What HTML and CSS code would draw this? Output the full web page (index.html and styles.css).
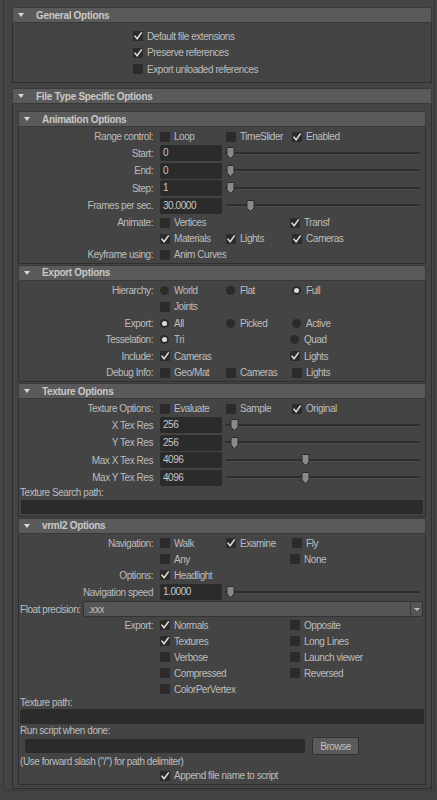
FILE: index.html
```html
<!DOCTYPE html>
<html>
<head>
<meta charset="utf-8">
<link rel="stylesheet" href="styles.css">
</head>
<body>
<div class="scroll">
  <section class="frame">
    <div class="fhead"><span class="tri"></span>General Options</div>
    <div class="fbody general">
      <div class="grow"><span class="cb on"><i class="box"><svg viewBox="0 0 10 10"><path d="M2 5.2 L4.1 7.8 L8.3 2"/></svg></i>Default file extensions</span></div>
      <div class="grow"><span class="cb on"><i class="box"><svg viewBox="0 0 10 10"><path d="M2 5.2 L4.1 7.8 L8.3 2"/></svg></i>Preserve references</span></div>
      <div class="grow"><span class="cb"><i class="box"></i>Export unloaded references</span></div>
    </div>
  </section>

  <section class="frame">
    <div class="fhead"><span class="tri"></span>File Type Specific Options</div>
    <div class="fbody outer">

      <section class="frame sub">
        <div class="fhead"><span class="tri"></span>Animation Options</div>
        <div class="fbody anim">
          <div class="row c3"><span class="lbl">Range control:</span>
            <span class="cb"><i class="box"></i>Loop</span>
            <span class="cb"><i class="box"></i>TimeSlider</span>
            <span class="cb on"><i class="box"><svg viewBox="0 0 10 10"><path d="M2 5.2 L4.1 7.8 L8.3 2"/></svg></i>Enabled</span>
          </div>
          <div class="row frow"><span class="lbl">Start:</span><span class="field">0</span>
            <div class="slider"><span class="track"></span><span class="thumb" style="left:1px"><svg viewBox="0 0 9 12"><path d="M1 1.5 Q1 .5 2 .5 H7 Q8 .5 8 1.5 V8 L4.5 11.5 L1 8 Z"/></svg></span></div></div>
          <div class="row frow"><span class="lbl">End:</span><span class="field">0</span>
            <div class="slider"><span class="track"></span><span class="thumb" style="left:1px"><svg viewBox="0 0 9 12"><path d="M1 1.5 Q1 .5 2 .5 H7 Q8 .5 8 1.5 V8 L4.5 11.5 L1 8 Z"/></svg></span></div></div>
          <div class="row frow"><span class="lbl">Step:</span><span class="field">1</span>
            <div class="slider"><span class="track"></span><span class="thumb" style="left:1px"><svg viewBox="0 0 9 12"><path d="M1 1.5 Q1 .5 2 .5 H7 Q8 .5 8 1.5 V8 L4.5 11.5 L1 8 Z"/></svg></span></div></div>
          <div class="row frow"><span class="lbl">Frames per sec.</span><span class="field">30.0000</span>
            <div class="slider"><span class="track"></span><span class="thumb" style="left:21px"><svg viewBox="0 0 9 12"><path d="M1 1.5 Q1 .5 2 .5 H7 Q8 .5 8 1.5 V8 L4.5 11.5 L1 8 Z"/></svg></span></div></div>
          <div class="row c2"><span class="lbl">Animate:</span>
            <span class="cb"><i class="box"></i>Vertices</span>
            <span class="cb on"><i class="box"><svg viewBox="0 0 10 10"><path d="M2 5.2 L4.1 7.8 L8.3 2"/></svg></i>Transf</span>
          </div>
          <div class="row c3"><span class="lbl"></span>
            <span class="cb on"><i class="box"><svg viewBox="0 0 10 10"><path d="M2 5.2 L4.1 7.8 L8.3 2"/></svg></i>Materials</span>
            <span class="cb on"><i class="box"><svg viewBox="0 0 10 10"><path d="M2 5.2 L4.1 7.8 L8.3 2"/></svg></i>Lights</span>
            <span class="cb on"><i class="box"><svg viewBox="0 0 10 10"><path d="M2 5.2 L4.1 7.8 L8.3 2"/></svg></i>Cameras</span>
          </div>
          <div class="row c3"><span class="lbl">Keyframe using:</span>
            <span class="cb"><i class="box"></i>Anim Curves</span>
          </div>
        </div>
      </section>

      <section class="frame sub">
        <div class="fhead"><span class="tri"></span>Export Options</div>
        <div class="fbody export">
          <div class="row c3"><span class="lbl">Hierarchy:</span>
            <span class="rb"><i class="dot"></i>World</span>
            <span class="rb"><i class="dot"></i>Flat</span>
            <span class="rb on"><i class="dot"></i>Full</span>
          </div>
          <div class="row c3"><span class="lbl"></span>
            <span class="cb"><i class="box"></i>Joints</span>
          </div>
          <div class="row c3"><span class="lbl">Export:</span>
            <span class="rb on"><i class="dot"></i>All</span>
            <span class="rb"><i class="dot"></i>Picked</span>
            <span class="rb"><i class="dot"></i>Active</span>
          </div>
          <div class="row c2"><span class="lbl">Tesselation:</span>
            <span class="rb on"><i class="dot"></i>Tri</span>
            <span class="rb"><i class="dot"></i>Quad</span>
          </div>
          <div class="row c2"><span class="lbl">Include:</span>
            <span class="cb on"><i class="box"><svg viewBox="0 0 10 10"><path d="M2 5.2 L4.1 7.8 L8.3 2"/></svg></i>Cameras</span>
            <span class="cb on"><i class="box"><svg viewBox="0 0 10 10"><path d="M2 5.2 L4.1 7.8 L8.3 2"/></svg></i>Lights</span>
          </div>
          <div class="row c3"><span class="lbl">Debug Info:</span>
            <span class="cb"><i class="box"></i>Geo/Mat</span>
            <span class="cb"><i class="box"></i>Cameras</span>
            <span class="cb"><i class="box"></i>Lights</span>
          </div>
        </div>
      </section>

      <section class="frame sub">
        <div class="fhead"><span class="tri"></span>Texture Options</div>
        <div class="fbody texture">
          <div class="row c3"><span class="lbl">Texture Options:</span>
            <span class="cb"><i class="box"></i>Evaluate</span>
            <span class="cb"><i class="box"></i>Sample</span>
            <span class="cb on"><i class="box"><svg viewBox="0 0 10 10"><path d="M2 5.2 L4.1 7.8 L8.3 2"/></svg></i>Original</span>
          </div>
          <div class="row frow"><span class="lbl">X Tex Res</span><span class="field">256</span>
            <div class="slider"><span class="track"></span><span class="thumb" style="left:5px"><svg viewBox="0 0 9 12"><path d="M1 1.5 Q1 .5 2 .5 H7 Q8 .5 8 1.5 V8 L4.5 11.5 L1 8 Z"/></svg></span></div></div>
          <div class="row frow"><span class="lbl">Y Tex Res</span><span class="field">256</span>
            <div class="slider"><span class="track"></span><span class="thumb" style="left:5px"><svg viewBox="0 0 9 12"><path d="M1 1.5 Q1 .5 2 .5 H7 Q8 .5 8 1.5 V8 L4.5 11.5 L1 8 Z"/></svg></span></div></div>
          <div class="row frow"><span class="lbl">Max X Tex Res</span><span class="field">4096</span>
            <div class="slider"><span class="track"></span><span class="thumb" style="left:76px"><svg viewBox="0 0 9 12"><path d="M1 1.5 Q1 .5 2 .5 H7 Q8 .5 8 1.5 V8 L4.5 11.5 L1 8 Z"/></svg></span></div></div>
          <div class="row frow"><span class="lbl">Max Y Tex Res</span><span class="field">4096</span>
            <div class="slider"><span class="track"></span><span class="thumb" style="left:76px"><svg viewBox="0 0 9 12"><path d="M1 1.5 Q1 .5 2 .5 H7 Q8 .5 8 1.5 V8 L4.5 11.5 L1 8 Z"/></svg></span></div></div>
          <div class="plabel">Texture Search path:</div>
          <div class="pfield"></div>
        </div>
      </section>

      <section class="frame sub">
        <div class="fhead"><span class="tri"></span>vrml2 Options</div>
        <div class="fbody vrml">
          <div class="row c3"><span class="lbl">Navigation:</span>
            <span class="cb"><i class="box"></i>Walk</span>
            <span class="cb on"><i class="box"><svg viewBox="0 0 10 10"><path d="M2 5.2 L4.1 7.8 L8.3 2"/></svg></i>Examine</span>
            <span class="cb"><i class="box"></i>Fly</span>
          </div>
          <div class="row c2"><span class="lbl"></span>
            <span class="cb"><i class="box"></i>Any</span>
            <span class="cb"><i class="box"></i>None</span>
          </div>
          <div class="row c2"><span class="lbl">Options:</span>
            <span class="cb on"><i class="box"><svg viewBox="0 0 10 10"><path d="M2 5.2 L4.1 7.8 L8.3 2"/></svg></i>Headlight</span>
          </div>
          <div class="row frow nav"><span class="lbl">Navigation speed</span><span class="field">1.0000</span>
            <div class="slider"><span class="track"></span><span class="thumb" style="left:1px"><svg viewBox="0 0 9 12"><path d="M1 1.5 Q1 .5 2 .5 H7 Q8 .5 8 1.5 V8 L4.5 11.5 L1 8 Z"/></svg></span></div></div>
          <div class="ddrow"><span class="ddlbl">Float precision:</span>
            <div class="dropdown"><span class="ddtext">.xxx</span><span class="ddarrow"><i></i></span></div>
          </div>
          <div class="row c2"><span class="lbl">Export:</span>
            <span class="cb on"><i class="box"><svg viewBox="0 0 10 10"><path d="M2 5.2 L4.1 7.8 L8.3 2"/></svg></i>Normals</span>
            <span class="cb"><i class="box"></i>Opposite</span>
          </div>
          <div class="row c2"><span class="lbl"></span>
            <span class="cb on"><i class="box"><svg viewBox="0 0 10 10"><path d="M2 5.2 L4.1 7.8 L8.3 2"/></svg></i>Textures</span>
            <span class="cb"><i class="box"></i>Long Lines</span>
          </div>
          <div class="row c2"><span class="lbl"></span>
            <span class="cb"><i class="box"></i>Verbose</span>
            <span class="cb"><i class="box"></i>Launch viewer</span>
          </div>
          <div class="row c2"><span class="lbl"></span>
            <span class="cb"><i class="box"></i>Compressed</span>
            <span class="cb"><i class="box"></i>Reversed</span>
          </div>
          <div class="row c2"><span class="lbl"></span>
            <span class="cb"><i class="box"></i>ColorPerVertex</span>
          </div>
          <div class="plabel">Texture path:</div>
          <div class="pfield tp"></div>
          <div class="plabel">Run script when done:</div>
          <div class="runrow"><span class="rfield"></span><span class="btn">Browse</span></div>
          <div class="plabel">(Use forward slash ("/") for path delimiter)</div>
          <div class="row c2"><span class="lbl"></span>
            <span class="cb on"><i class="box"><svg viewBox="0 0 10 10"><path d="M2 5.2 L4.1 7.8 L8.3 2"/></svg></i>Append file name to script</span>
          </div>
        </div>
      </section>

    </div>
  </section>
</div>
</body>
</html>
```

FILE: styles.css
```css
* { box-sizing: border-box; }
html, body { margin: 0; padding: 0; background: #444444; }
body {
  width: 437px;
  height: 800px;
  overflow: hidden;
  font-family: "Liberation Sans", Arial, sans-serif;
  font-size: 10px;
  letter-spacing: -0.45px;
  color: #bdbdbd;
}

.scroll {
  margin-left: 3px;
  width: 432px;
  height: 791px;
  border-left: 1px solid #363636;
  border-right: 1px solid #363636;
  border-bottom: 1px solid #363636;
  padding: 7px 2px 0 8px;
  display: flex;
  flex-direction: column;
  gap: 5px;
}

.frame { display: flex; flex-direction: column; }

.fhead {
  height: 16px;
  flex: none;
  display: flex;
  align-items: center;
  background: #5a5a5a;
  border: 1px solid #393939;
  border-radius: 2px;
  font-weight: bold;
  letter-spacing: -0.3px;
  color: #c8c8c8;
  padding-left: 5px;
}
.tri {
  width: 0; height: 0;
  border-left: 3.5px solid transparent;
  border-right: 3.5px solid transparent;
  border-top: 4px solid #d8d8d8;
  margin-right: 12px;
}

.fbody {
  border: 1px solid #2f2f2f;
  border-top: none;
  display: flex;
  flex-direction: column;
}

.general { height: 60px; padding: 5px 0 0 120px; }
.grow { height: 16.5px; display: flex; align-items: center; }

.outer { padding: 7px 5px 3px 5px; gap: 1px; flex: 1; }
.sub .fbody { padding-top: 1.5px; }

.row {
  display: grid;
  height: 16px;
  align-items: center;
}
.export .row { height: 16.5px; }
.row.c3 { grid-template-columns: 141px 66px 66px 1fr; }
.row.c2 { grid-template-columns: 141px 130px 1fr; }
.row.frow { grid-template-columns: 141px 62px 1fr; height: 17.5px; }
.row.nav { height: 18px; }
.lbl { text-align: right; padding-right: 7px; white-space: nowrap; }

.cb, .rb { display: inline-flex; align-items: center; white-space: nowrap; }
.box {
  width: 10px; height: 10px;
  background: #2b2b2b;
  border-radius: 1px;
  margin-right: 4px;
  display: block;
  flex: none;
}
.box svg { width: 10px; height: 10px; display: block; }
.box path { fill: none; stroke: #e2e2e2; stroke-width: 1.5; stroke-linecap: square; }

.dot {
  width: 9px; height: 9px;
  border-radius: 50%;
  background: #2b2b2b;
  margin-right: 5px;
  flex: none;
  display: flex;
  align-items: center;
  justify-content: center;
}
.rb.on .dot::after {
  content: "";
  width: 5px; height: 5px;
  border-radius: 50%;
  background: #dcdcdc;
}

.field {
  height: 16px;
  background: #2b2b2b;
  border-radius: 2px;
  padding-left: 3px;
  line-height: 16px;
  color: #c8c8c8;
}

.slider {
  position: relative;
  height: 16px;
  margin: 0 5px 0 3px;
  display: flex;
  align-items: center;
}
.track {
  flex: 1;
  height: 3px;
  background: #2e2e2e;
  border-radius: 2px;
  border-bottom: 1px solid #4c4c4c;
}
.thumb {
  position: absolute;
  top: 2px;
  width: 9px;
  height: 12px;
}
.thumb svg { width: 9px; height: 12px; display: block; }
.thumb path { fill: #8a8a8a; stroke: #2a2a2a; stroke-width: 1; }

.plabel { height: 12px; line-height: 12px; padding-left: 1px; white-space: nowrap; }
.pfield {
  height: 14px;
  margin: 1px 2px 1px 2px;
  background: #2b2b2b;
  border-radius: 2px;
}
.texture { padding-bottom: 1px; }
.pfield.tp { height: 14.5px; margin: 0 1px 1px 1px; }

.ddrow { height: 16px; display: flex; align-items: center; padding-left: 1px; }
.ddlbl { width: 63px; white-space: nowrap; }
.dropdown {
  flex: 1;
  margin-right: 2px;
  height: 16px;
  background: #555555;
  border: 1px solid #333333;
  border-radius: 2px;
  display: flex;
  align-items: center;
}
.ddtext { flex: 1; padding-left: 4px; color: #c0c0c0; }
.ddarrow {
  width: 12px;
  height: 14px;
  border-left: 1px solid #3a3a3a;
  display: flex;
  align-items: center;
  justify-content: center;
}
.ddarrow i {
  width: 0; height: 0;
  border-left: 3px solid transparent;
  border-right: 3px solid transparent;
  border-top: 3px solid #c0c0c0;
}

.runrow { height: 19px; display: flex; align-items: center; padding-left: 6px; gap: 7px; }
.rfield { width: 280px; height: 14px; background: #2b2b2b; border-radius: 2px; }
.btn {
  width: 47px;
  height: 18px;
  background: #5a5a5a;
  border: 1px solid #303030;
  border-radius: 2px;
  display: flex;
  align-items: center;
  justify-content: center;
  color: #c0c0c0;
}
```
